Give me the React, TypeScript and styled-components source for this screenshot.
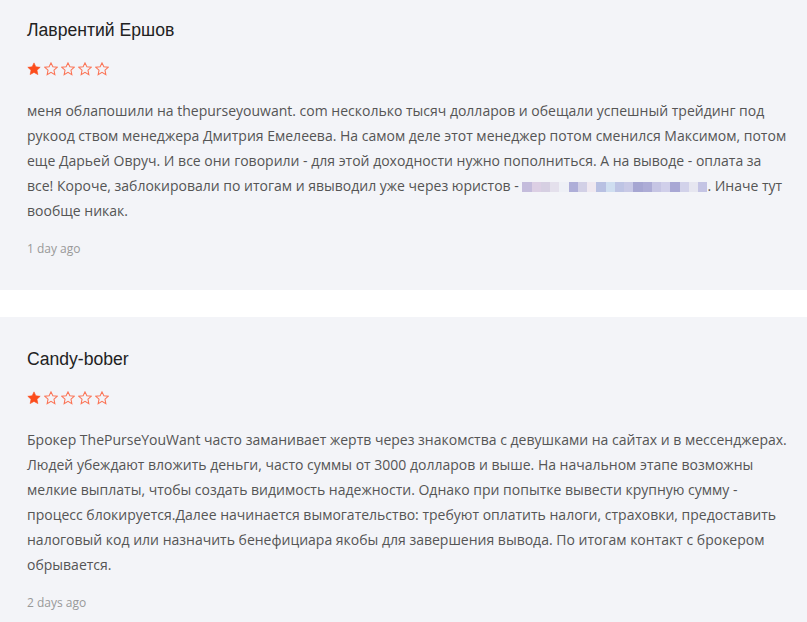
import { createGlobalStyle } from 'styled-components'
import styled from 'styled-components'

const GlobalStyle = createGlobalStyle`
  html, body {
    margin: 0;
    padding: 0;
    background: #ffffff;
    overflow: hidden;
  }
`;

const ReviewList = styled.div`
  display: flex;
  flex-direction: column;
  gap: 27px;
  margin-top: -12px;
`;

const Card = styled.div`
  background: #f3f4f8;
  padding: 31px 18px 32px 27px;
`;

const Author = styled.div`
  font-family: "Liberation Sans", Arial, sans-serif;
  font-size: 17.6px;
  line-height: 22px;
  color: #222;
`;

const Stars = styled.div`
  display: flex;
  gap: 3px;
  height: 14px;
  margin-top: 21px;
`;

const Body = styled.p`
  margin: 22px 0 0;
  font-family: "Open Sans", sans-serif;
  font-size: 14px;
  line-height: 25px;
  color: #555;
`;

const Time = styled.div`
  margin-top: 17px;
  font-family: "Open Sans", sans-serif;
  font-size: 12px;
  line-height: 18px;
  color: #999;
`;

const Blur = styled.span`
  display: inline-flex;
  vertical-align: -1px;
  height: 10px;
`;

const Pixel = styled.span<{ $c: string }>`
  display: inline-block;
  width: 9.25px;
  height: 10px;
  background: ${p => p.$c};
`;

const blurColors = [
  '#c4bcdc', '#dccfe4', '#d6cfe2', '#e4e0ec', '#eef0f6',
  '#aeaed8', '#d2d0e6', '#efe8f0', '#b8c0e2', '#cfdef0',
  '#bec4e4', '#c8c9e6', '#a6a6d2', '#adacd6', '#c6c5e4',
  '#d0cfea', '#a8a7d4', '#d2d2ea', '#e6e6f0', '#c4c4e4',
]

const Star = ({ filled }: { filled: boolean }) => (
  <svg width="14" height="14" viewBox="0 0 24 24">
    <polygon
      points="12,1.5 15.2,8.3 22.6,9.1 17.1,14.1 18.6,21.6 12,17.8 5.4,21.6 6.9,14.1 1.4,9.1 8.8,8.3"
      fill={filled ? '#fc4c1c' : 'none'}
      stroke={filled ? '#fc4c1c' : '#fb7456'}
      strokeWidth={filled ? 1 : 1.8}
      strokeLinejoin="miter"
    />
  </svg>
)

const Rating = ({ value }: { value: number }) => (
  <Stars>
    {[0, 1, 2, 3, 4].map(i => <Star key={i} filled={i < value} />)}
  </Stars>
)

const App = () => {
  return (
    <>
      <GlobalStyle />
      <ReviewList>
        <Card>
          <Author>Лаврентий Ершов</Author>
          <Rating value={1} />
          <Body>
            меня облапошили на thepurseyouwant. com несколько тысяч долларов и обещали успешный трейдинг под<br />
            рукоод ством менеджера Дмитрия Емелеева. На самом деле этот менеджер потом сменился Максимом, потом
            еще Дарьей Овруч. И все они говорили - для этой доходности нужно пополниться. А на выводе - оплата за
            все! Короче, заблокировали по итогам и явыводил уже через юристов -{' '}
            <Blur>
              {blurColors.map((c, i) => <Pixel key={i} $c={c} />)}
            </Blur>
            . Иначе тут вообще никак.
          </Body>
          <Time>1 day ago</Time>
        </Card>
        <Card>
          <Author>Candy-bober</Author>
          <Rating value={1} />
          <Body>
            Брокер ThePurseYouWant часто заманивает жертв через знакомства с девушками на сайтах и в мессенджерах.
            Людей убеждают вложить деньги, часто суммы от 3000 долларов и выше. На начальном этапе возможны
            мелкие выплаты, чтобы создать видимость надежности. Однако при попытке вывести крупную сумму -
            процесс блокируется.Далее начинается вымогательство: требуют оплатить налоги, страховки, предоставить
            налоговый код или назначить бенефициара якобы для завершения вывода. По итогам контакт с брокером
            обрывается.
          </Body>
          <Time>2 days ago</Time>
        </Card>
      </ReviewList>
    </>
  )
}

export default App
